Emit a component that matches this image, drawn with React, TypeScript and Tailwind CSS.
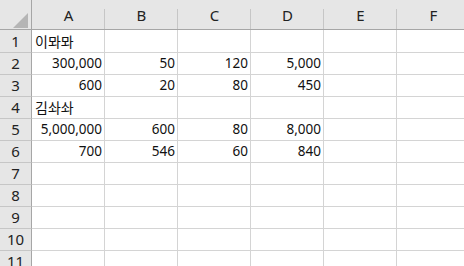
import React from "react";

const cols = ["A", "B", "C", "D", "E", "F"];
type Cell = { v: string; left?: boolean };
const data: (Cell | null)[][] = [
  [{ v: "이뫄뫄", left: true }, null, null, null, null, null],
  [{ v: "300,000" }, { v: "50" }, { v: "120" }, { v: "5,000" }, null, null],
  [{ v: "600" }, { v: "20" }, { v: "80" }, { v: "450" }, null, null],
  [{ v: "김솨솨", left: true }, null, null, null, null, null],
  [{ v: "5,000,000" }, { v: "600" }, { v: "80" }, { v: "8,000" }, null, null],
  [{ v: "700" }, { v: "546" }, { v: "60" }, { v: "840" }, null, null],
  [null, null, null, null, null, null],
  [null, null, null, null, null, null],
  [null, null, null, null, null, null],
  [null, null, null, null, null, null],
  [null, null, null, null, null, null],
];

export default function App() {
  return (
    <div
      className="w-[464px] h-[266px] overflow-hidden bg-white text-[#111]"
      style={{ fontFamily: '"Noto Sans", "Noto Sans CJK KR", sans-serif' }}
    >
      <div className="flex h-[30px] bg-[#e6e6e6] border-b border-[#a6a6a6]">
        <div className="relative w-[32px] shrink-0 border-r border-[#a6a6a6]">
          <svg className="absolute left-[13px] top-[13px]" width="15" height="15" viewBox="0 0 15 15">
            <polygon points="15,0 15,15 0,15" fill="#b5b5b5" />
          </svg>
        </div>
        {cols.map((c) => (
          <div
            key={c}
            className="relative shrink-0 w-[73px] flex items-center justify-center text-[15px] text-[#222]"
          >
            <span className="pt-[2px]">{c}</span>
            <div className="absolute right-0 top-[9px] bottom-0 w-px bg-[#c6c6c6]" />
          </div>
        ))}
      </div>
      {data.map((row, r) => (
        <div key={r} className={`flex ${r === 0 ? "h-[23px]" : "h-[22px]"}`}>
          <div className="w-[32px] shrink-0 bg-[#e6e6e6] border-r border-[#a6a6a6] border-b border-b-[#c6c6c6] flex items-center justify-center text-[15px] text-[#222]">
            {r + 1}
          </div>
          {row.map((cell, c) => (
            <div
              key={c}
              className={`w-[73px] shrink-0 border-r border-b border-[#d4d4d4] flex items-center pl-[3px] pr-[2px] whitespace-nowrap ${
                cell?.left ? "justify-start text-[14px]" : "justify-end text-[13.5px]"
              }`}
            >
              {cell?.v}
            </div>
          ))}
        </div>
      ))}
    </div>
  );
}
